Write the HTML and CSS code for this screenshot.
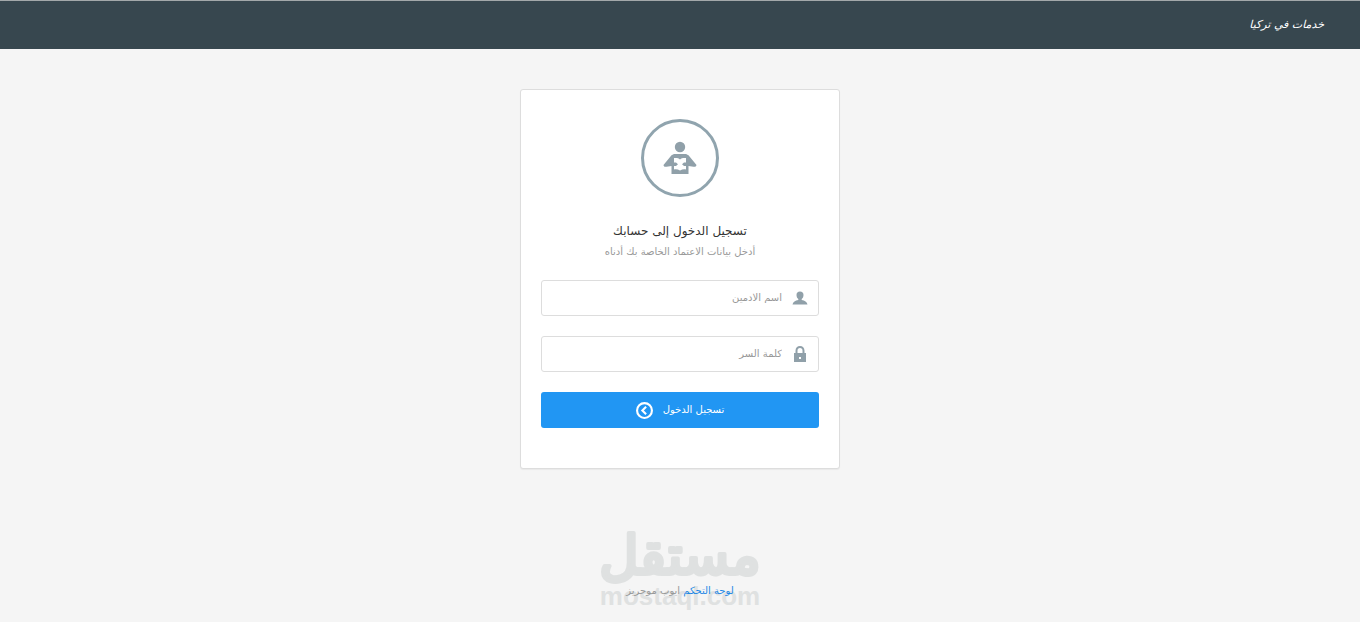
FILE: index.html
```html
<!DOCTYPE html>
<html lang="ar" dir="rtl">
<head>
<meta charset="utf-8">
<meta name="viewport" content="width=device-width, initial-scale=1">
<title>تسجيل الدخول</title>
<link rel="stylesheet" href="styles.css">
</head>
<body class="page">
<header class="navbar"><a class="brand" href="#">خدمات في تركيا</a></header>
<main class="content">
<form class="card">
<div class="avatar">
<svg class="reader" viewBox="0 0 34 34" aria-hidden="true"><circle cx="17" cy="6" r="5.200"/><path fill-rule="evenodd" d="M11 13h12l2.500 1.200L33.500 24c-.2 1.500-1.500 2-3 1.800L25.500 25V33h-17v-8l-5 .8c-1.700.2-3-.4-3-1.800L8.500 14.200zM11 17v4.500h2l2 1.700-2 1.800h-2v3.500c2.300-.5 4 0 6 1 2-1 4-1.500 6-1V25h-2l-2-1.800 2-1.700h2V17c-2.500-.3-4.500 0-6 1.500C15.500 17 13.500 16.700 11 17z"/></svg>
</div>
<h1 class="title">تسجيل الدخول إلى حسابك</h1>
<p class="subtitle">أدخل بيانات الاعتماد الخاصة بك أدناه</p>
<label class="field">
<svg class="icon" viewBox="0 0 16 16" aria-hidden="true"><path d="M8 1.500c2.300 0 3.500 1.400 3.500 3.500 0 1.800-.7 3.300-1.800 4.100v1c3 .3 5.300 1.900 5.800 4.400H.5c.5-2.500 2.800-4.100 5.800-4.400v-1C5.200 8.300 4.500 6.800 4.500 5c0-2.100 1.200-3.500 3.500-3.500z"/></svg>
<input class="input" type="text" placeholder="اسم الادمين" aria-label="اسم الادمين">
</label>
<label class="field">
<svg class="icon" viewBox="0 0 16 16" aria-hidden="true"><path fill-rule="evenodd" d="M3.500 7V4.700C3.500 2 5.300 0 8 0s4.500 2 4.500 4.700V7H14v9H2V7h1.500zm2 0h5V4.700C10.500 3 9.600 2 8 2S5.500 3 5.500 4.700zM7 11v2h2v-2z"/></svg>
<input class="input" type="password" placeholder="كلمة السر" aria-label="كلمة السر">
</label>
<button class="submit" type="submit"><span>تسجيل الدخول</span>
<svg class="submit-icon" viewBox="0 0 16 16" aria-hidden="true"><circle cx="8" cy="8" r="7"/><path d="M9.500 4.500 6 8l3.500 3.500"/></svg>
</button>
</form>
</main>
<footer class="footer">
<div class="watermark"><svg class="mark-ar" viewBox="0 0 180 70"><text x="90" y="62" text-anchor="middle">مستقل</text></svg><span class="mark-en" dir="ltr">mostaql.com</span></div>
<p class="credit"><a class="link" href="#">لوحة التحكم</a> ايوب موحريز</p>
</footer>
</body>
</html>
```
FILE: styles.css
```css
* { box-sizing: border-box; }
.page {
  margin: 0;
  min-height: 100vh;
  display: flex;
  flex-direction: column;
  background: #f5f5f5;
  color: #333;
  font: 12px/20px "DejaVu Sans", sans-serif;
}
.navbar {
  height: 49px;
  padding: 0 36px;
  display: flex;
  align-items: center;
  background: #37474f;
  border-top: 1px solid #a3a8aa;
}
.brand {
  color: #fff;
  font-size: 11px;
  font-style: italic;
  text-decoration: none;
}
.content {
  flex: 1;
  padding: 40px 20px;
}
.card {
  max-width: 320px;
  margin: 0 auto;
  padding: 29px 20px 40px;
  display: flex;
  flex-direction: column;
  background: #fff;
  border: 1px solid #ddd;
  border-radius: 3px;
  box-shadow: 0 1px 1px rgba(0, 0, 0, 0.05);
}
.avatar {
  align-self: center;
  width: 78px;
  height: 78px;
  display: flex;
  align-items: center;
  justify-content: center;
  border: 3px solid #90a4ae;
  border-radius: 50%;
}
.reader { width: 34px; height: 34px; fill: #90a0a9; }
.title {
  margin: 23px 0 0;
  font-size: 12px;
  font-weight: 400;
  line-height: 22px;
  text-align: center;
}
.subtitle {
  margin: 0 0 18px;
  color: #999;
  font-size: 10px;
  text-align: center;
}
.field {
  height: 36px;
  margin-bottom: 20px;
  padding: 0 10px;
  display: flex;
  align-items: center;
  gap: 10px;
  border: 1px solid #ddd;
  border-radius: 3px;
}
.icon { width: 16px; height: 16px; flex: none; fill: #90a0a9; }
.input {
  flex: 1;
  min-width: 0;
  padding: 0;
  border: 0;
  outline: 0;
  background: none;
  color: #333;
  font: 10px/20px "DejaVu Sans", sans-serif;
}
.input::placeholder { color: #999; opacity: 1; }
.submit {
  height: 36px;
  display: flex;
  align-items: center;
  justify-content: center;
  gap: 10px;
  border: 0;
  border-radius: 3px;
  background: #2196f3;
  color: #fff;
  font: 10px/20px "DejaVu Sans", sans-serif;
}
.submit-icon {
  width: 17px;
  height: 17px;
  fill: none;
  stroke: #fff;
  stroke-width: 2;
}
.footer {
  position: relative;
  padding: 0 20px 21px;
  text-align: center;
}
.credit {
  position: relative;
  margin: 0;
  color: #999;
  font-size: 10px;
}
.link { color: #1e88e5; text-decoration: none; }
.watermark {
  position: absolute;
  left: 0;
  right: 0;
  bottom: 12px;
  display: flex;
  flex-direction: column;
  align-items: center;
  color: #dfe1e1;
  pointer-events: none;
}
.mark-ar {
  width: 180px;
  height: 70px;
  overflow: visible;
  font-size: 54px;
  fill: #dfe1e1;
  stroke: #dfe1e1;
  stroke-width: 4px;
  stroke-linejoin: round;
}
.mark-en { font: 700 26px/28px "Liberation Sans", sans-serif; }
```
